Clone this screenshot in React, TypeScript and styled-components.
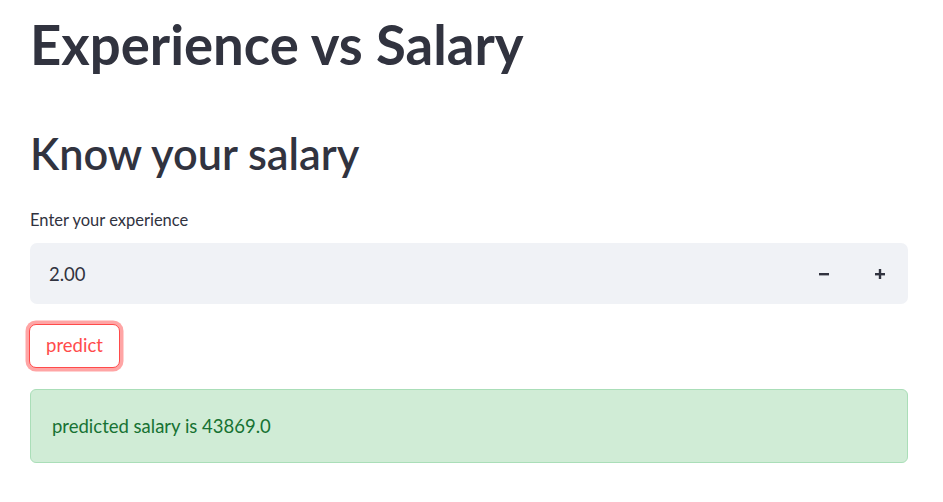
import React from "react";
import styled, { createGlobalStyle } from "styled-components";

const Global = createGlobalStyle`
  html, body { margin: 0; padding: 0; background: #ffffff; }
  body { font-family: "Lato", "Noto Sans", sans-serif; color: rgb(49, 51, 63); }
  * { box-sizing: border-box; }
`;

const Page = styled.main`
  display: flex;
  flex-direction: column;
  padding: 0 35px 0 30px;
  width: 943px;
`;

const Title = styled.h1`
  margin: 8px 0 0 0;
  font-size: 54.5px;
  font-weight: 700;
  line-height: 72px;
  color: rgb(49, 51, 63);
`;

const Subtitle = styled.h2`
  margin: 45px 0 0 0;
  font-size: 43.3px;
  font-weight: 600;
  line-height: 56px;
  color: rgb(49, 51, 63);
`;

const Label = styled.label`
  margin-top: 28px;
  font-size: 16.5px;
  line-height: 22px;
  color: rgb(49, 51, 63);
`;

const InputRow = styled.div`
  margin-top: 12px;
  display: flex;
  height: 61px;
  border-radius: 7px;
  background: rgb(240, 242, 246);
  overflow: hidden;
`;

const NumberField = styled.div`
  flex: 1;
  display: flex;
  align-items: center;
  padding-left: 19px;
  font-size: 18.5px;
  color: rgb(49, 51, 63);
`;

const StepButton = styled.button`
  width: 56px;
  border: none;
  background: transparent;
  display: flex;
  align-items: center;
  justify-content: center;
  padding: 0;
  cursor: pointer;
`;

const ButtonRow = styled.div`
  margin-top: 20px;
  display: flex;
`;

const PredictButton = styled.button`
  width: 91px;
  height: 44px;
  border: 1.5px solid rgb(255, 75, 75);
  border-radius: 7px;
  background: #ffffff;
  color: rgb(255, 75, 75);
  font-family: inherit;
  font-size: 18.5px;
  box-shadow: 0 0 0 3.5px rgba(255, 75, 75, 0.5);
  padding: 0 0 2px 0;
  margin-left: -1px;
`;

const Alert = styled.div`
  margin-top: 21px;
  height: 74px;
  display: flex;
  align-items: center;
  padding-left: 21px;
  background: rgb(208, 236, 214);
  border: 1px solid rgb(170, 222, 184);
  border-radius: 6px;
  color: rgb(23, 114, 51);
  font-size: 18.5px;
`;

const Minus = () => (
  <svg width="12" height="12" viewBox="0 0 12 12">
    <rect x="1" y="5" width="10" height="2.4" fill="rgb(49,51,63)" />
  </svg>
);

const Plus = () => (
  <svg width="12" height="12" viewBox="0 0 12 12">
    <rect x="1" y="5" width="10" height="2.4" fill="rgb(49,51,63)" />
    <rect x="4.8" y="1" width="2.4" height="10" fill="rgb(49,51,63)" />
  </svg>
);

export default function App() {
  return (
    <>
      <Global />
      <Page>
        <Title>Experience vs Salary</Title>
        <Subtitle>Know your salary</Subtitle>
        <Label>Enter your experience</Label>
        <InputRow>
          <NumberField>2.00</NumberField>
          <StepButton aria-label="decrement"><Minus /></StepButton>
          <StepButton aria-label="increment"><Plus /></StepButton>
        </InputRow>
        <ButtonRow>
          <PredictButton>predict</PredictButton>
        </ButtonRow>
        <Alert>predicted salary is 43869.0</Alert>
      </Page>
    </>
  );
}
